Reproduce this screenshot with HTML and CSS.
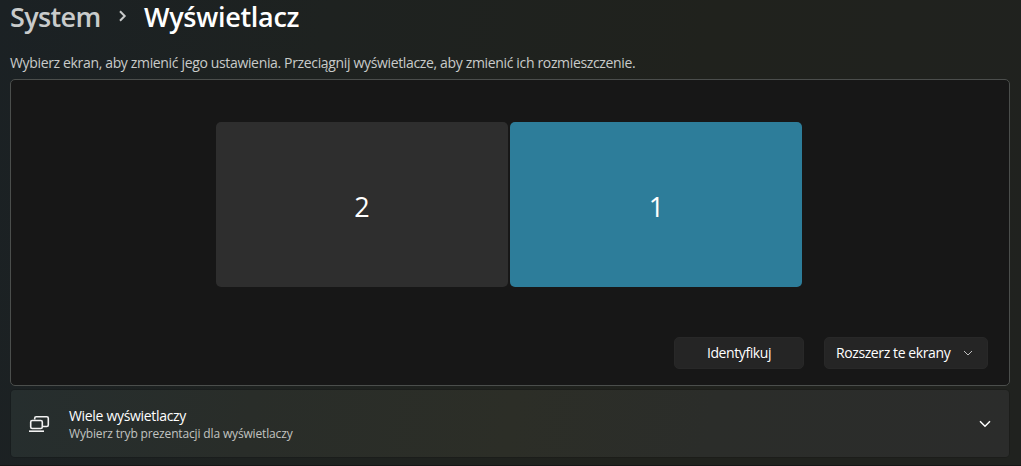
FILE: index.html
```html
<!DOCTYPE html>
<html lang="pl">
<head>
<meta charset="utf-8">
<title>Wyświetlacz</title>
<link rel="stylesheet" href="styles.css">
</head>
<body>
<main class="page">
  <h1 class="breadcrumb">
    <span class="crumb-parent">System</span>
    <svg class="crumb-arrow" width="10" height="14" viewBox="0 0 10 14"><path d="M2 2.2 6.7 7 2 11.8"/></svg>
    <span class="crumb-current">Wyświetlacz</span>
  </h1>
  <p class="hint">Wybierz ekran, aby zmienić jego ustawienia. Przeciągnij wyświetlacze, aby zmienić ich rozmieszczenie.</p>
  <section class="arrange">
    <div class="monitors">
      <div class="monitor">2</div>
      <div class="monitor selected">1</div>
    </div>
    <div class="actions">
      <button class="btn identify">Identyfikuj</button>
      <button class="btn extend"><span>Rozszerz te ekrany</span>
        <svg class="chevron-small" width="10" height="6" viewBox="0 0 10 6"><path d="M1 1l4 4 4-4"/></svg>
      </button>
    </div>
  </section>
  <section class="card">
    <svg class="card-icon" width="22" height="18" viewBox="0 0 22 18"><path d="M5.7 4.5V3.2Q5.7 1.7 7.2 1.7H17.8Q19.3 1.7 19.3 3.2V10Q19.3 11.5 17.8 11.5H14"/><rect x="1.7" y="5.5" width="11.6" height="8" rx="1.5"/><path d="M0 16.2H15"/></svg>
    <div class="card-copy">
      <div class="card-title">Wiele wyświetlaczy</div>
      <div class="card-sub">Wybierz tryb prezentacji dla wyświetlaczy</div>
    </div>
    <svg class="chevron" width="12" height="8" viewBox="0 0 12 8"><path d="M1 1.2l5 5 5-5"/></svg>
  </section>
</main>
</body>
</html>
```
FILE: styles.css
```css
* { box-sizing: border-box; }
body {
  margin: 0;
  height: 466px;
  overflow: hidden;
  background: linear-gradient(100deg, #1b2124 0%, #1e2220 30%, #20221d 65%, #20221f 100%);
  color: #fff;
  font-family: "Open Sans", "Noto Sans", sans-serif;
}
.page {
  height: 466px;
  padding: 0 12px 0 10px;
  border-bottom: 1px solid #151616;
  display: flex;
  flex-direction: column;
}
svg { fill: none; flex: none; }
.breadcrumb {
  margin: 0;
  height: 34px;
  display: flex;
  align-items: center;
  font-size: 27px;
  font-weight: 600;
  line-height: 34px;
  white-space: nowrap;
}
.crumb-parent { width: 108px; color: #c9cbcb; letter-spacing: -0.65px; }
.crumb-arrow { stroke: #c9cbcb; stroke-width: 2; margin: 0 16px 2px 0; }
.crumb-current { letter-spacing: -0.3px; }
.hint {
  margin: 18px 0 0;
  height: 27px;
  font-size: 14px;
  line-height: 21px;
  letter-spacing: -0.345px;
  color: #c9cbca;
  white-space: nowrap;
}
.arrange {
  width: 1000px;
  height: 307px;
  border: 1px solid #4b4e4c;
  border-radius: 5px;
  background: #171717;
  padding: 42px 21px 0 205px;
}
.monitors { display: flex; gap: 2px; }
.monitor {
  width: 292px;
  height: 165px;
  border-radius: 5px;
  background: #2e2e2e;
  display: flex;
  align-items: center;
  justify-content: center;
  font-size: 27px;
  padding: 4px 0 0 0;
}
.selected { background: #2d7d9a; padding-left: 1px; }
.actions { display: flex; justify-content: flex-end; gap: 20px; margin-top: 50px; }
.btn {
  height: 32px;
  padding: 0;
  border: 1px solid #282828;
  border-radius: 5px;
  background: #252525;
  color: #fff;
  font: 14px/20px "Open Sans", "Noto Sans", sans-serif;
  letter-spacing: -0.4px;
  display: flex;
  align-items: center;
  white-space: nowrap;
}
.identify { width: 130px; justify-content: center; }
.extend { width: 164px; padding: 0 14px 0 11px; justify-content: space-between; }
.chevron-small { stroke: #c0c0c0; }
.card {
  margin: 4px 0 0 1px;
  width: 998px;
  height: 67px;
  border-radius: 4px;
  background: linear-gradient(100deg, #262e2e 0%, #292d29 24%, #2c2e27 50%, #2b2d2a 70%, #2b2c2b 100%);
  box-shadow: 0 0 0 1px rgba(0, 0, 0, .12);
  display: flex;
  align-items: center;
  padding: 1px 18px 0;
}
.card-icon { stroke: #f2f2f2; stroke-width: 1.6; margin-right: 18px; }
.card-copy { flex: 1; white-space: nowrap; }
.card-title { font-size: 14px; line-height: 18px; letter-spacing: -0.32px; }
.card-sub { font-size: 12px; line-height: 17px; letter-spacing: -0.15px; color: #c2c4c1; }
.chevron { stroke: #fff; stroke-width: 1.5; }
```
